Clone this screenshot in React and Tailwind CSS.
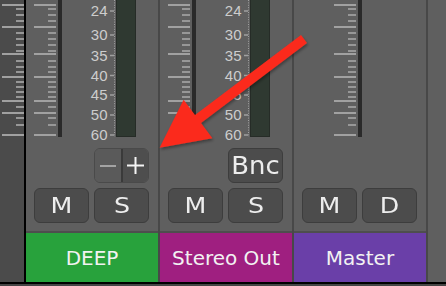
import React from 'react';

// fader scale tick rows (y centres, px)
const LONG_TICKS = [5, 27, 54, 77, 101, 113, 135];
const SHORT_TICKS = [9, 15, 21, 33, 39, 45, 51, 61, 67, 72, 82, 87, 92, 97, 107, 118, 125];
const METER_NUMS = [['24', 11], ['30', 35], ['35', 55.5], ['40', 75.5], ['45', 95], ['50', 115], ['60', 135]];

const FONT = '"DejaVu Sans", Verdana, sans-serif';

const FaderTicks = ({ x, track = true }) => (
  <g>
    {LONG_TICKS.map(y => <rect key={'l' + y} x={x} y={y - 1} width={22} height={2} fill="#a1a1a1" />)}
    {SHORT_TICKS.map(y => <rect key={'s' + y} x={x + 14} y={y - 1} width={8} height={2} fill="#979797" />)}
    {track && <rect x={x + 24} y={0} width={4} height={137} fill="#2a2a2a" />}
  </g>
);

const MeterScale = () => (
  <g>
    {METER_NUMS.map(([t, y]) => (
      <g key={t}>
        <text x={81.5} y={y + 5.3} textAnchor="end" fontSize="15" fill="#cdcdcd" fontFamily='"Liberation Sans", Arial, sans-serif'>{t}</text>
        <rect x={84} y={y - 0.75} width={4} height={1.5} fill="#a0a0a0" />
      </g>
    ))}
    <line x1={88.5} y1={0} x2={88.5} y2={137} stroke="#a0a0a0" strokeWidth={1} strokeDasharray="1 1.4" />
    <rect x={90.5} y={-2} width={19} height={138.5} fill="#2f3931" stroke="#262c27" />
  </g>
);

const Btn = ({ children, big }) => (
  <div
    className="flex items-center justify-center rounded-[6px] border border-[#3d3d3d] bg-[#4c4c4c] text-[#ededed]"
    style={{ fontFamily: FONT }}
  >
    <span className={big ? 'inline-block scale-x-[1.08] text-[24px] leading-none' : 'inline-block scale-x-[1.15] text-[22px] leading-none'}>
      {children}
    </span>
  </div>
);

const ZoomPair = () => (
  <div className="flex overflow-hidden rounded-[6px] border border-[#4a4a4a]">
    <div className="flex flex-1 items-center justify-center bg-[#5a5a5a]">
      <svg width="16" height="4"><rect x="0" y="1" width="16" height="2" fill="#a3a3a3" /></svg>
    </div>
    <div className="w-[2px] bg-[#3a3a3a]" />
    <div className="flex w-[25px] items-center justify-center bg-[#4e4e4e]">
      <svg width="17" height="17">
        <rect x="0" y="7.5" width="17" height="2" fill="#f4f4f4" />
        <rect x="7.5" y="0" width="2" height="17" fill="#f4f4f4" />
      </svg>
    </div>
  </div>
);

const Strip = ({ label, labelClass, meter, faderX, top, buttons }) => (
  <div className="flex w-[134px] shrink-0 flex-col border-r-2 border-[#484848] bg-[#5f5f5f]">
    <svg width="132" height="142" className="block overflow-visible">
      <FaderTicks x={faderX} />
      {meter && <MeterScale />}
    </svg>
    <div className="mt-[6px] grid h-[35px] grid-cols-2 gap-[5px] pl-2 pr-[9px]">
      <div />
      {top}
    </div>
    <div className="mt-[5px] grid h-[35px] grid-cols-2 gap-[5px] pl-2 pr-[9px]">
      {buttons.map(b => <Btn key={b}>{b}</Btn>)}
    </div>
    <div className="mt-[8px] h-[2px] bg-[#4e4e4e]" />
    <div
      className={`flex h-[49px] items-center justify-center text-[20px] text-[#f2f2f2] ${labelClass}`}
      style={{ fontFamily: FONT }}
    >
      {label}
    </div>
  </div>
);

export default function App() {
  return (
    <div className="relative flex h-[286px] w-[446px] flex-col overflow-hidden bg-[#454545]">
      <div className="flex h-[282px]">
        {/* previous strip, cut off */}
        <div className="w-[24px] shrink-0 bg-[#4b4b4b]">
          <svg width="24" height="142" className="block">
            <FaderTicks x={2} track={false} />
          </svg>
        </div>
        <div className="w-[2px] shrink-0 bg-black" />

        <Strip label="DEEP" labelClass="bg-[#28a23c]" meter faderX={8} top={<ZoomPair />} buttons={['M', 'S']} />
        <Strip label="Stereo Out" labelClass="bg-[#9f1f80]" meter faderX={8} top={<Btn big>Bnc</Btn>} buttons={['M', 'S']} />
        <Strip label="Master" labelClass="bg-[#6a3fa8]" faderX={40} top={null} buttons={['M', 'D']} />

        <div className="flex-1 bg-[#5f5f5f]" />
      </div>
      <div className="h-[2px] bg-black" />
      <div className="h-[2px] bg-[#454545]" />

      {/* annotation arrow */}
      <svg width="446" height="286" className="pointer-events-none absolute inset-0">
        <defs>
          <filter id="sh" x="-20%" y="-20%" width="140%" height="140%">
            <feDropShadow dx="1" dy="2" stdDeviation="1.5" floodColor="#000" floodOpacity="0.35" />
          </filter>
        </defs>
        <polygon
          points="301,35 307,43 201,123 212.4,138.2 159.6,147.8 183.6,99.8 195,115"
          fill="#fb2a1c"
          filter="url(#sh)"
        />
      </svg>
    </div>
  );
}
